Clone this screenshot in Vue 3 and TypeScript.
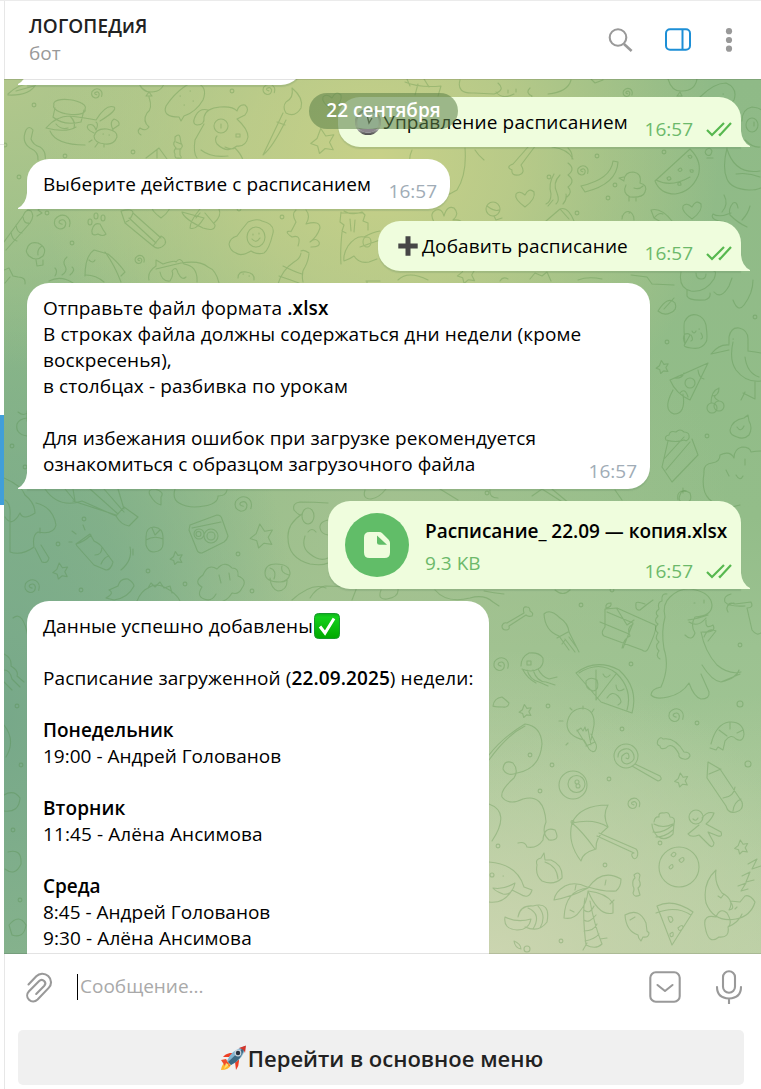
<script setup lang="ts">
interface Point { x: number; y: number; s?: number }

const dots: Point[] = [
  { x: 34, y: 105 }, { x: 232, y: 91 }, { x: 133, y: 152 }, { x: 65, y: 156 }, { x: 5, y: 145 }, { x: 19, y: 177 },
  { x: 47, y: 213 }, { x: 72, y: 243 }, { x: 282, y: 217 }, { x: 239, y: 209 }, { x: 597, y: 156 }, { x: 664, y: 152 },
  { x: 608, y: 198 }, { x: 615, y: 185 }, { x: 549, y: 177 }, { x: 577, y: 213 }, { x: 667, y: 342 }, { x: 755, y: 317 },
  { x: 707, y: 436 }, { x: 12, y: 446 }, { x: 25, y: 467 }, { x: 84, y: 519 }, { x: 58, y: 544 }, { x: 148, y: 571 },
  { x: 81, y: 590 }, { x: 185, y: 584 }, { x: 238, y: 554 }, { x: 252, y: 591 }, { x: 487, y: 493 }, { x: 581, y: 605 },
  { x: 740, y: 645 }, { x: 631, y: 664 }, { x: 612, y: 590 }, { x: 548, y: 706 }, { x: 740, y: 704, s: 3 },
  { x: 697, y: 723 }, { x: 622, y: 729 }, { x: 530, y: 755 }, { x: 552, y: 765 }, { x: 748, y: 764, s: 3 },
  { x: 609, y: 779 }, { x: 540, y: 791 }, { x: 660, y: 843 }, { x: 498, y: 846 }, { x: 605, y: 865 }, { x: 561, y: 941 },
  { x: 527, y: 949, s: 3 }, { x: 17, y: 706 }, { x: 21, y: 765 }, { x: 13, y: 830 }, { x: 20, y: 900 },
]
const stars: Point[] = [
  { x: 322, y: 141, s: 1.25 }, { x: 466, y: 274, s: 0.95 }, { x: 662, y: 367, s: 0.65 }, { x: 60, y: 571, s: 0.8 },
  { x: 176, y: 558, s: 0.65 }, { x: 261, y: 536, s: 1.2 }, { x: 525, y: 711, s: 0.65 }, { x: 681, y: 780, s: 0.7 },
  { x: 741, y: 847, s: 0.7 },
]
const spirals: Point[] = [
  { x: 96, y: 94, s: 0.8 }, { x: 268, y: 90, s: 0.9 }, { x: 61, y: 223, s: 1.2 }, { x: 139, y: 260, s: 0.7 },
  { x: 627, y: 93, s: 0.7 }, { x: 582, y: 171, s: 0.8 }, { x: 242, y: 505, s: 1.25 }, { x: 31, y: 587, s: 1.1 },
  { x: 500, y: 665, s: 1.1 }, { x: 675, y: 716, s: 1.1 }, { x: 633, y: 804, s: 0.9 },
]
const hearts: Point[] = [
  { x: 525, y: 198 }, { x: 692, y: 210 }, { x: 332, y: 101 }, { x: 161, y: 209 },
]
const at = (p: Point) => `translate(${p.x} ${p.y}) scale(${p.s ?? 1})`

const shapes: string[] = [
  // leaf, jar, fish, crab
  'M8 94Q20 82 36 84Q30 96 8 95ZM16 91L34 86',
  'M54 105a16 6 8 1 0 31 4a16 6 8 1 0-31-4M55 108l-2 9q10 9 28 5l3-12M46 128q10-12 24-12q16 2 26 4q10-16 18-13q4 3-14 14M46 128q20 5 30-1M50 131q6 14 35 14M70 116q6 6 4 12M56 124q5 6 12 4',
  'M94 136q2-8 13-7q11 2 10 8q-3 8-12 7q-11-1-11-8M94 133q-9-4-6-8q6-2 8 5q3-6 0-8M113 130q-4-8 1-11q6 2 5 6l-6 4M98 143l-3 4M104 144v3M92 140l-3 2M103 134h.5M109 135h.5',
  'M26 130q3-5 7 0l-2 9q2 6 9 8q8 5 4 19M26 130q-5 12 4 18q9 4 8 12',
  // balloon, loaf
  'M138 80q3 12 13 12q12 0 14-12M149 92l-3 4h6l-3-4M149 97q4 12-2 16q-5 8 2 14q-3 5-9 1q-4 4 1 7',
  'M197 83q11 4 6 17q-7 12-19 16l-3 5l-2-4q-17 0-13-11q8-12 18-19q6-5 13-4M180 96h.5M190 91h.5M184 105h.5M193 101h.5',
  // dog
  'M208 110q-8-2-12 5q-5 9 1 10q8 0 7-8q2-9 16-10q13-1 17 4q2-7 8-6q5 4 0 10l-8 4q11 10 11 18q-2 10-11 9q-10 8-20-2q-3-5 0-8M236 134h4v3h-4zM214 126a7 7 0 1 0 14 0a7 7 0 1 0-14 0M221 124v4M204 124l-9 16q-2 13 2 18M225 147q6 3 10 1M235 148q6 6 8 12M201 150q10 8 27 6',
  // brush
  'M292 88q12 10 9 20q-6 10-15 5q-4-6 0-11q8-4 6-14M283 113l-20 42q10-8 23-35M277 122l8 3',
  'M175 137q4-4 5 0l1 6q3 4-1 6v6q3 4-1 3q-5 1-4-4q-2-3 1-6q-4-4-1-7zM176 142l5 2M176 149h5',
  'M146 158l13-10l8 11M157 150v8',
  // pencil cup and characters under the header
  'M405 82q14 6 36 4l-3 10M418 84l-3 11M424 79l5 8M410 86l-3-7M460 80q-4 14 14 13l20 1q12-4 4-11M496 92q6 8 18 2M530 88q-5 5 2 8q-2 4 3 5M548 94q20-2 23-14M508 90v3M516 89v3',
  'M591 79l4 4l8-3M668 79q4 13 14 12q13 0 15-12M680 92l-3 4h5z',
  'M700 97q14-14 26-14q12 5 8 17q-8 10-18 7M723 94h.5M742 121q0-12 10-14q9 1 10 4M746 125a6 7 0 1 0 12 0a6 7 0 1 0-12 0M754 122v4M727 148q-5 20 0 31q4 10 22 11q14 0 18-8M736 174q12-2 24 3M727 149q8 26 33 22M745 140q8 8 15 7',
  // cup, bone, ribbons
  'M412 150q-4 9-1 14q10 4 12-3M465 148q2 26-8 42l-11 6q-20 2-19-9l-1-9q10-5 21-1l2 9M484 160q-6-5-9-10M513 164l15-17q-3-7 3-7q8-2 5 5l-15 20q5 8-2 10q-8 1-7-5q-7-3 1-6M552 147q16 2 21 12M568 148q5 5 4 11',
  'M568 163q8 6 0 12q8 6 0 12q5 5-1 10M560 175q-8 8-3 18q3 8-1 11M554 174q-6 10-3 20q0 8-5 10M581 186q30-7 32-25l5 1q-1 22-33 30z',
  // duck and melon
  'M624 180q1-8 9-8q9 1 7 11q8 2 5 9q-2 6-15 5q-8-4-4-12M624 177l-5 1l5 3M629 197v4M636 197v4M634 188q5 2 9-2M690 149q13 13 8 27q-7 16-23 18q-15 0-20-13zM656 180q15 8 34-3M688 156q3-2 4 1q-2 3-4-1M678 170q3-4 4 0q-2 3-4 0M690 170q4-1 3 2q-3 1-3-2M667 178q3-3 4 1q-3 3-4-1M678 183q3-2 3 2q-4 1-3-2M706 150q4-4 6 1q-1 6-5 4q-3-2-1-5M707 158h6',
  // flower, lolly, pencil
  'M434 222q-5-9 2-12q6-2 8 6q3-11 10-8q6 6-1 12q10-1 9 5M486 209a7 7 0 1 1 14 0a7 7 0 1 1-14 0M487 206q8 6 12 4M494 216l2 4l6-2M381 200v-6l8 2l2-6h6M546 221l14-12l9 10M560 209q8-3 14 12M548 206l5-6M563 204q4-4 3-10',
  'M651 210l3 8l7 4M651 210q10-3 21 11M654 218q5-6 9-4M724 195q5 9-2 17M731 213q-12 5-18 1q-4 6 12 8M738 208q-1-7-5-5q-5 6-3 12q8 8 17 12M750 206q-2 8-8 14',
  'M622 216h.5M629 213h.5M622 219a3 4 0 0 1 12 1',
  // candle, paw, pencil, plane, egg
  'M4 242l19-26q3-8 8-5q4 5-1 12l-24 27M11 232q1 8 6 9M16 225q1 8 6 8M23 217q1 7 6 6M37 216l5-3l-4-3l4-3M92 230q2-8 8-6q3 6 6 10q-3 3-8 0q-7 3-6-4',
  'M88 222a2 3 0 1 0 4 0a2 3 0 1 0-4 0M94 216a2 3 0 1 0 4 0a2 3 0 1 0-4 0M101 218a2 3 0 1 0 4 0a2 3 0 1 0-4 0',
  'M121 211l4 12l28 23M121 211q12-3 12 2l28 25M126 222q4-1 7-9M129 218l27 25M153 246l8-10q6 3 4 8q-6 7-12 2',
  'M200 209q-10 12-10 19q6 3 14-10l-22-6q2 7 21 16q12 4 12-3l-10-12M214 223q8-7 5-14M196 218l4-5',
  'M248 222q9-4 14-1q13 3 11 12q-4 17-9 20q-7 2-13-2q-10 6-15 2q-6-2-7-9q1-6 8-8q5-7 11-14M247 237a9 10 0 1 0 18 0a9 10 0 1 0-18 0M252 239q4 5 8-1M253 234v1M259 233v1',
  // fish, shark, cat, bottle
  'M27 249q2-8 11-6q10 5 5 13q-7 6-14 0q-4-4-2-7M36 260l1 6l6-1v-5M38 255q-1-6 4-9M4 270l5-2l4 8l5 1q8 0 7 7M10 277l-5 6M55 276q3-5 0-8M62 275q6-4 3-9q-3-5 2-9M70 275q6-5 2-8M49 281q12-6 24 2',
  'M85 276q0-20 9-26l14 4q10 8 17 18l-4 4M89 260q4 4 6 0M105 252q9 12 16 30M86 275q10 0 18 7M149 280q-2-8 7-14v-6l7 4q12-4 13-2q4-6 8 2q14 2 13 18M156 269l25-6q19-3 27 4q8 3 11 16M160 272q2 10 10 9q4-6 2-10q4-6 6 2q4 8 8 4',
  'M301 251q3-2 8 2M301 253q-1 6-7 9q-12 8-16 22M309 254q-1 8-4 13q-4 5-2 15M283 266q12 6 19 8M279 276q12 4 20 7M296 210q-5 4 0 12q-6 12-5 9q-8 0 1 6q10-3 6 9M306 210q5 6 0 14q14-4 14 4q-3 9-10 14q6-5 9 0q2 5-8 5',
  'M238 278q0-7 8-6q9 1 8 8M243 274h.5M249 276h.5',
  // guitarist
  'M341 212l-1 10l4 3l-2 6l4 2M341 213h22M344 211q8 5 18 1l3 3l-2 6l5 2v7M350 219l1 12M355 220l-1 12M342 232q-2 20-1 32M348 246q8-11 16-9q9-5 16-6M348 246q-5 8-4 15q6-2 10-5q5 8 15 6l8-3M363 242a4 5 0 1 0 8 0a4 5 0 1 0-8 0M360 247l20-7',
  'M366 281h14M367 281v4M398 280q10-10 30 0M500 281q3-5 8-2M530 279l5-6l7 3l5-4l4 9M578 280q10-4 24-1M631 275l16 2l5 7l22 1M681 272q-3 16 10 19q14 2 23-12q3-8 0-8M687 290v6q2 5 18 4q6-2 5-7M714 292q7 8 15-6l3-8M733 300q5 13 11 5q9-12 9-25M696 273q0 6 5 6q5 0 5-5',
  // leaf, ghost, pelican, pizza
  'M658 311q10-16 17-8q3 7-5 10q-6 3-12-2M664 309l10-11M685 344q-3-7 0-10q4-1 5 1l-5 9M685 344q-2-22-0-23q4-8 12-6q7 2 9 10q2 15 0 17q-4 8-15 6q-9-1-6-4M692 331q2 4 4 0M699 329h.5M691 335q3 5 0 6M701 333q3 5 0 6',
  'M711 354q8-10 18-9M729 344v-7q2-10 10-9q9 2 9 11v12q8 1 13 2M733 342q-4 18 3 28q10 13 25 11M745 357q2 16 14 20M755 382v17l-12-6M745 392l-4 8M733 339h.5M711 354l18-4',
  'M670 380l38-17l-18 37q-14-6-20-20M674 378q8 1 10-5M698 370q1 8 6 9M685 383a5 5 0 1 0 10 0a5 5 0 1 0-10 0M680 393q5-6 8 4M673 390q-11 20 1 24q12 0 9-20M707 408a5 5 0 1 0 10 0a5 5 0 1 0-10 0M714 406a5 5 0 1 0 10 0a5 5 0 1 0-10 0M711 403q0-12 8-15q0 8-7 8M719 401q-7-4-3-6',
  // fruit, cake, cloud tree
  'M730 430q2-10 14-12l4-3l1 6q4 7 0 14q-5 5-12 2q-7-2-7-7M737 427q4 6 7-1M666 440q-2-4 3-5q1-5 7-3q4-4 8 0q6 0 5 6q-2 4-5 2q-8 3-18 0M668 441l-6 26l10 15l26-27l-6-16M664 459l20-22M666 470l24-28M704 473q-1-9 8-10q8-1 8-8q10-5 14 3q0-9 8-11q8 0 9 5q5-1 10-1M704 473q-3 18 5 26q12 12 31 6M726 470l3 6M745 459v6M736 475q4 7 7 1M680 495q2-7 10-2q3 9-5 10q-8-1-5-8M683 493v-5',
  'M27 418q-8 1-10 6q-2 10 10 12M18 412q6 5 10 0M27 411v10',
  // ice pop and hot air balloon
  'M4 478q18 8 21 17q10 8 10 18q-12 8-15 0q-8 15-15 4M5 500q6 4 5 16v36q12 4 24-5q-2-12 4-15q16 3 18-7q-3-18-20-22M35 548l7 14q6 2 7-4l-8-13M40 528v5',
  'M45 489q14 20 37 12l34 15M65 489l10 12l-2-12M73 501l43 14M90 489l28 25M104 489l20 23M118 489l6 20M116 516l8-9l14 10l-9 9q-8-1-13-10',
  // torch
  'M76 544l14-10l4 7q6 3 8 6l11 15q-2 8-7 8l-12-5l-17-19zM76 544q8-2 15-9M95 555q7 0 7-8M101 564q3-7 8-8M85 530l-2-5M76 534l-4-3M69 542h3M130 547q3 13-9 23M133 549v6',
  // acorn
  'M146 537q0-10 8-10q9 1 9 10v7q0 7-9 8q-6 0-8-7zM146 540q8-5 17-1M152 528l3 7l5-5M155 489q-8 0-5 6q5 9 11 10v-8q4-5-6-8M175 489q-3 10 4 14q10 6 25 3q14-2 14-10q8 0 9-6',
  // camera
  'M190 525l27-10q4 0 5 4l6 17q-1 4-4 6l-22 11q-4 0-5-3l-8-20zM194 534a5 5 0 1 0 10 0a5 5 0 1 0-10 0M196 534a2 2 0 1 0 5 0a2 2 0 1 0-5 0M204 536a7 7 0 1 0 14 0a7 7 0 1 0-14 0M207 536a4 4 0 1 0 8 0a4 4 0 1 0-8 0M192 528l29-6',
  'M203 575q5-12 14-6q8-9 15-1q7 0 6 8q10 4 4 12q-3 7-10 5q-5 9-14 9M203 575q-10 7-1 12q-6 9 2 12q8 3 12-5M219 575l2 8M229 573l1 7M137 601q4-10 11-13q8-6 18 0q10 5 14 13M148 588l3-5l4 4l5-5l4 6l6-2l2 7',
  'M118 586q2-8 10-7q6 4 6 7q-6 12-20 14l-8-2q9-5 3-8zM265 573q0-9 11-9q14 0 14 10q-2 8-10 8q-15 0-15-9M270 578q1 11 8 13q10-1 9-12M270 568q7 2 4 11M282 566q-2 7 7 9',
  'M294 510q-2-7 6-8q14 0 28 1M294 510q6 7 8 4q-15 10-14 24q0 20 22 26q12 2 18-1M302 516a6 8 0 1 0 12 0a6 8 0 1 0-12 0M328 520q-9 2-8 8q1 6 8 7M308 532q4-5 8 0M305 536q-4 12 5 18q10 8 18 4M292 600q20-18 34-12M365 490q-3 9 6 9q8-1 15-10M440 489l18 11M490 490q-1 8 8 8M532 496l10-7l22 14M552 489l18 15M615 490l7 10M678 500q-2-10 8-9',
  'M310 598q6-10 15-12l32 1l-5 13M381 590q-4 10 6 9q12-2 11-10M435 590q12 14 35 8q14-4 23 4l6 4M484 591q10 2 20 3M555 590q8 7 15 0',
  // bone, fork, chocolate
  'M502 626q1-4 5-3l17-10q-2-7 3-6q3 0 3 4q4 2 2 5q-4 1-6-1l-17 11q1 4-3 4q-4 0-4-4',
  'M544 614q6-6 16 4q8 5 9 14l10 20M544 614q1 17 15 22l10 14M557 638l11-6M562 644l3-4M565 639l10 13M569 637l8 11',
  'M605 609l12-1l38 17q3 3-7 24q-2 4-6 1l-38-14q-4-3 1-9zM600 622l29 12M607 612l26 11l-10 25M617 609l10 16l7-5M622 648q2-10 8-12q-4-8 3-12M606 608q-1-5 5-5q1 4-5 5',
  // dinosaur
  'M670 597q11-11 26-7q15 4 16 15q0 11-17 12q-5 8 0 16q-3 9-10 2M670 597q-8 7-5 20q-4 14-1 32q6 18-3 38M694 603h1M704 600v3M688 620q9-1 20-5M689 622q9 6 17-4M706 620q-1 10 7 5q4 8-11 7M701 632q4 20 16 33M704 637q4-10 12-6l-8 10M702 665q10 16 19 17q16-4 18-12M717 665q12 10 24 7M661 687q-10 2-10 8q5 5 17 2q14-3 21-14M689 683q5 14 12 16q9 0 8-7l-8-18M721 682l19-8',
  'M667 594q-6-1-5 7q-5 1-3 8q-5 4-1 7q-5 5 0 8q-5 5 0 9q-4 5 1 9q-5 4 0 9q-4 5 1 8',
  'M731 594q-8 2-6 8q4 5 20 4M727 608q1-7 8-4l16-2q3 6-4 6l5 22q5 7 10 2M728 612q-4-7 6-9M645 604q-8-3-9-1q-1 8 4 7q6-5 13-10',
  // jellyfish
  'M521 666q0-9 8-13q10-1 14 5q1 8-5 11q-7 4-16 0M523 670q4 8 13 13M527 670q3 10 12 12l9 4M533 670q4 12 13 12l9 3M538 669q4 8 11 10l8-2M527 661h4v4h-4z',
  // pizza
  'M576 673q20-15 43-3q20 18 13 43l-31-11zM579 673q20-13 37 0q17 16 11 37M586 681q4-5 11-1q3 10-4 11q-8-2-7-10M596 670v30l20-26M603 674q3 6 7 1M607 698q5-8 11-2q6 6 0 9M616 685q1 9 8 4',
  'M493 706q1-8 9-9q4 3 7 6q-1 5-6 4q-9 0-10-1',
  // fishing rod
  'M489 755q14-18 36-31q16 2 17 20q-2 25-25 29q-10 4-14-4q1-10 10-6q6 7 1 15q-14 12-12 19q7 9 21 2q21-6 23 23q-5 11 3 18q12 1 6-10q-11-4-12 10q-6 9-16 7q-2-6-9-4M489 760q18-25 36-34',
  // bulb, eight ball, lollipop
  'M584 740q-17-4-17-16q2-15 16-16q12 2 11 17l-3 15M584 740l5 9q3 4 6 2q3-4 0-9l-4-8M586 746l9-4M577 730l10 16M577 731l4-3l2 3l2-4l1 4l2-2l3 16M572 710l-2-2M583 709v-3M592 712l2-3M563 721h-4M568 743l-2 2M559 785a14 14 0 1 0 28 0a14 14 0 1 0-28 0M568 784a8 8 0 1 0 17 0a8 8 0 1 0-17 0M575 782a2 2 0 1 0 4 0a2 2 0 1 0-4 0M576 786a2 2 0 1 0 4 0a2 2 0 1 0-4 0',
  'M614 756a12 12 0 1 0 24 0a12 12 0 1 0-24 0M618 757a8 8 0 0 1 15-4q4 8-6 11q-7-1-5-8q6-6 7 0q0 4-3 2M635 764l25 12q3 4-2 5l-26-15',
  // bone, shrimp, marker
  'M658 740q3-4 5-1q12-2 21 13q6 0 6 4q-2 4-6 3q-6-1-5-5q-7-13-13-6q-6 2-6-2q-4-1-2-6M711 744q5-20 18-22q14-1 15 12q-1 9-8 5q-5-6-11 2l-2 9l-5-3l-2 3l-6-2M719 730l8 6M730 722v7M743 730l-6 3M708 762l12 7l22 33q2 8-6 10q-8 2-10-6l-19-28zM709 774l12-5M723 798q11-1 12-11M733 811q1-9 8-12',
  // umbrella
  'M608 805q-28 0-36 18q-5 20 9 38q1-8 15-12q-1-12 12-22q-6-12 0-22M572 823q10 8 23 26M572 823q22-5 36 4M599 833l37 16q3 3 1 8q-3 4-5-1q-1-3 2-3l-37-17M571 822a1.5 1.5 0 1 0 3 0a1.5 1.5 0 1 0-3 0',
  // cupcake, gingerbread man
  'M654 822q1-6 5-5q-1-5 5-4q5-2 6 4q6 0 4 7l-1 10q-8 8-16 2q-5-6-5-12M654 824q9 5 19 0M653 832q9 2 20-7M656 837q9 0 17-7M689 817a7 7 0 1 0 14 0a7 7 0 1 0-14 0M702 818q5-7 12-5q-2 6-8 11l15 8q2 5-3 4l-10-4l6 11q-1 6-5 2l-10-10q-8 3-11-1l11-9M693 819q3 3 5-1',
  // whale, peach
  'M489 862q28 2 35 25l8 3q-3 10-12 4l-8-4q-8 14-23 12M490 875a2 2 0 1 0 4 0a2 2 0 1 0-4 0M503 876h.5M493 888q10 2 22-5q-3 13-12 11q-8-3-10-6M489 804q22 8 3 37M537 865q-2-6 4-7l3-5l1 7l6 0q12 5 11 18q-8 8-20 3q-7-6-5-16M545 862q12 4 13 17',
  // palm
  'M587 887q-12-6-22-1q-10 6-11 14q17-3 34-12M588 888q14-20 33-9q0 8-5 12q-12 1-28-4M588 888q-23 2-24 30q10 2 16-7q7-8 8-20q18 2 25 12v10q-14 4-25-22M585 898q-3 15 1 47q10 5 16-1q-8-20-12-43M584 910q6 5 10-4M584 920q5 4 12-5M584 931q10 0 13-7M585 941q10-2 14-7M600 939l7-1M583 950l4-7M575 890l1-5M605 885l1-5M570 910l4 2M610 904l4-4',
  // candy, bowling ball
  'M634 875q4-4 6 0l-1 5q3 5-1 8l2 7q-6 3-7-2q2-4 0-7q-1-6 2-8zM659 867a20 20 0 1 0 40 0a20 20 0 1 0-40 0M671 855q3-5 5-1q-2 5-5 1M679 860q5-5 5 0q-3 5-5 0M669 867q4-5 4 0q-3 4-4 0',
  // oranges, fish, pizza
  'M505 917q12 6 26 2q-2 11-14 11q-14-1-12-13M518 917q2-12 15-11q18-5 14 16q-8 11-22 5M528 908q14 6 5 21M538 906q9 10 2 22M514 941q7 3 7 8q-6-1-7-8M625 915q14-8 21 8l1 8l2 2q0 5-6 4l-2 4q-3-3-3-6q-12-4-13-20M630 920l5-3M657 906q16-8 36 6l-21 33zM656 913q20-8 35 2M668 917q4-2 5 3q-3 6-5-3M678 928q5-5 5 0q-4 5-5 0M670 934q4-4 3 2q-3 2-3-2',
  // sleeping moon
  'M716 870q-14 13-10 33q8 20 30 16q15-3 19-17q-5-8-10-6l-5 6l-10-1q6 8-1 9q6-10-7-17q-8-10-6-23M718 896l3 2l3-4M735 909l2-2M705 926q-2-12 11-9q4-10 11-4q6 10 1 14q2 11-9 10q-11 9-14-11M738 886l8-3l-5 8l7-2M742 876l8-4l-4 10l8-2M748 864l9-5l-5 10l9-3M742 914q-3 8-14 13',
  // shapes along the left edge
  'M13 618q10-8 15 19M4 654q8 4 7 12q8 5 6 10l7 6M4 670q6 0 8 9l8 8M4 682l8 8M4 725q12 15 2 32M4 795q10-6 16 3q-1 15-16 13M8 852q14-4 13 12q-6 13-16 5M9 925q10-12 17 0q-2 14-14 10z',
]
</script>

<template>
  <div class="window">
    <aside class="rail"><i class="rail-line"></i><i class="rail-active"></i></aside>
    <main class="pane">
      <header class="header">
        <div class="peer">
          <h1>ЛОГОПЕДиЯ</h1>
          <p>бот</p>
        </div>
        <svg class="header-icons" width="136" height="34" viewBox="0 0 136 34" fill="none">
          <g stroke="#999" stroke-width="2.1"><circle cx="13" cy="14.5" r="8.3" /><path d="M19 21l7.6 7" stroke-width="2.6" /></g>
          <g stroke="#1d8fd6" stroke-width="2"><rect x="61" y="6.2" width="24" height="20.6" rx="4" /><path d="M77.5 6v21" /></g>
          <g fill="#999"><circle cx="124" cy="8.2" r="3.1" /><circle cx="124" cy="17" r="3.1" /><circle cx="124" cy="25.7" r="3.1" /></g>
        </svg>
      </header>

      <section class="chat">
        <svg class="doodles" viewBox="4 79 757 875" width="757" height="875">
          <path v-for="(d, i) in shapes" :key="'p' + i" :d="d" />
          <circle v-for="(p, i) in dots" :key="'d' + i" :cx="p.x" :cy="p.y" :r="p.s ?? 1.9" />
          <path v-for="(p, i) in stars" :key="'s' + i" :transform="at(p)" d="M-1-10L3-4L9.5-5L6 1L9 7L2.5 6L-2 10L-3.5 4L-9 2L-4-2Z" />
          <path v-for="(p, i) in spirals" :key="'w' + i" :transform="at(p)" d="M1 1Q-3 0-1-2Q3-4 4 0Q4 5-1 5Q-7 3-5-3Q-1-8 4-6Q9-3 7 3" />
          <path v-for="(p, i) in hearts" :key="'h' + i" :transform="at(p)" d="M0 9Q-11 1-9-4Q-6-8 0-3Q4-11 9-6Q11 1 0 9Z" />
        </svg>

        <div class="messages">
          <div class="bubble in w-prev"><svg class="tail" viewBox="0 0 10 16"><path d="M10 0V16H0V15Q8 11 9 0Z" /></svg></div>

          <div class="bubble out w-manage">
            <svg class="emoji clock" viewBox="0 0 26 26">
              <defs><linearGradient id="rim" x1="0" y1="0" x2="0" y2="1"><stop offset="0" stop-color="#9a9a9a" /><stop offset=".7" stop-color="#ddd" /><stop offset="1" stop-color="#555" /></linearGradient></defs>
              <circle cx="13" cy="13" r="12" fill="#d8e5e8" stroke="url(#rim)" stroke-width="2.5" />
              <path d="M3.5 19Q13 21 22.5 19A12 12 0 0 1 3.5 19" fill="#8b858b" />
              <path d="M12 6l2 8l3-5" fill="none" stroke="#555" stroke-width="1.4" />
            </svg><span>Управление расписанием</span>
            <span class="meta">16:57<svg class="ticks" viewBox="0 0 26 16"><path d="M1 9l5 5L18 2M13 13l1 1L25 2" /></svg></span>
            <svg class="tail" viewBox="0 0 10 16"><path d="M10 0V16H0V15Q8 11 9 0Z" /></svg>
          </div>

          <div class="bubble in w-choose">
            <span class="wide">Выберите действие с расписанием</span><span class="meta">16:57</span>
            <svg class="tail" viewBox="0 0 10 16"><path d="M10 0V16H0V15Q8 11 9 0Z" /></svg>
          </div>

          <div class="bubble out w-add">
            <svg class="emoji plus" viewBox="0 0 26 26"><path d="M13 3.3V22.7M3.3 13H22.7" stroke="#464646" stroke-width="5" /></svg><span class="wide">Добавить расписание</span>
            <span class="meta">16:57<svg class="ticks" viewBox="0 0 26 16"><path d="M1 9l5 5L18 2M13 13l1 1L25 2" /></svg></span>
            <svg class="tail" viewBox="0 0 10 16"><path d="M10 0V16H0V15Q8 11 9 0Z" /></svg>
          </div>

          <div class="bubble in w-send">
            <span class="wide">Отправьте файл формата <b>.xlsx</b><br />В строках файла должны содержаться дни недели (кроме<br />воскресенья),<br />в столбцах - разбивка по урокам<br /><br />Для избежания ошибок при загрузке рекомендуется</span><br />ознакомиться с образцом загрузочного файла<span class="meta">16:57</span>
            <svg class="tail" viewBox="0 0 10 16"><path d="M10 0V16H0V15Q8 11 9 0Z" /></svg>
          </div>

          <div class="bubble out file">
            <div class="file-icon">
              <svg viewBox="0 0 26 26" width="26" height="26"><path fill="#effddd" d="M5.5 0H15Q17 0 18.5 1.4L24.5 7.5Q26 9 26 11V20.5Q26 26 20.5 26H5.5Q0 26 0 20.5V5.5Q0 0 5.5 0Z" /><path d="M13 3.5L23 12.8H15.5Q13 12.8 13 10.3Z" fill="#61bd68" /></svg>
            </div>
            <div class="file-text"><b>Расписание_ 22.09 — копия.xlsx</b><span>9.3 KB</span></div>
            <span class="meta">16:57<svg class="ticks" viewBox="0 0 26 16"><path d="M1 9l5 5L18 2M13 13l1 1L25 2" /></svg></span>
            <svg class="tail" viewBox="0 0 10 16"><path d="M10 0V16H0V15Q8 11 9 0Z" /></svg>
          </div>

          <div class="bubble in w-done">
            <span class="wide">Данные успешно добавлены</span><svg class="emoji check" viewBox="0 0 26 26">
              <defs><linearGradient id="chk" x1="0" y1="0" x2="0" y2="1"><stop offset="0" stop-color="#10b01c" /><stop offset=".15" stop-color="#14d01c" /><stop offset="1" stop-color="#00a800" /></linearGradient></defs>
              <rect x=".5" y=".5" width="25" height="25" rx="4" fill="url(#chk)" stroke="#179a2c" />
              <path d="M6 13.5l5 6.5L20 5.5" fill="none" stroke="#fff" stroke-width="3" />
            </svg><br /><br /><span class="wide">Расписание загруженной (<b>22.09.2025</b>) недели:</span><br /><br /><b>Понедельник</b><br />19:00 - Андрей Голованов<br /><br /><b class="wide">Вторник</b><br /><span class="wide">11:45 - Алёна Ансимова</span><br /><br /><b>Среда</b><br />8:45 - Андрей Голованов<br /><span class="wide">9:30 - Алёна Ансимова</span><br /><br />
          </div>
        </div>
        <div class="date">22 сентября</div>
      </section>

      <footer class="composer">
        <div class="input-row">
          <svg class="clip" viewBox="0 0 28 32" width="28" height="32"><path d="M2.5 12.5L10.3 4.3C13.4 1.1 18.5.6 22.2 4.1C26.2 7.8 25.6 12.8 22.7 15.9L11.6 27.5C8.9 30.1 5.4 30 3 27.7C.5 25.2.7 21.6 3 19.2L12.9 9.2C14.6 7.5 16.8 7.6 18.2 9C19.7 10.5 19.4 12.6 18.1 14L10.2 22" /></svg>
          <div class="field"><i></i>Сообщение...</div>
          <svg class="box" viewBox="0 0 32 32" width="32" height="32"><rect x="1.3" y="1.3" width="29.4" height="29.4" rx="5.5" /><path d="M8.5 14l7.5 6l7.5-6" /></svg>
          <svg class="mic" viewBox="0 0 28 34" width="28" height="34"><rect x="8" y="1.2" width="12" height="21.5" rx="6" /><path d="M2 17q0 11 12 11.5q12-.5 12-11.5M14 28.5V34" /></svg>
        </div>
        <button class="menu" type="button">
          <svg viewBox="0 0 26 26" width="26" height="26">
            <path d="M8 12L2 12Q4 9 9 8L13 8ZM14 17L15 25Q18 21 18 16L18 12Z" fill="#ee3f24" />
            <path d="M6 16Q1 18 0 25Q8 25 10 20Z" fill="#ffb52d" /><path d="M5 14L9 21L4 21L0 15Z" fill="#ef4f2c" /><path d="M5 18L8 20L3 24Z" fill="#ffe06a" />
            <path d="M6 16Q10 5 24 1Q24 13 10 20Z" fill="#83b4d0" /><path d="M10 20Q21 15 24 1L7 17Z" fill="#3d6983" />
            <path d="M18 3L25 .5L24 8Q23 4 18 3Z" fill="#d3352b" /><circle cx="17" cy="8" r="3.4" fill="#c9d4dd" /><circle cx="17" cy="8" r="2.2" fill="#27303c" />
          </svg>Перейти в основное меню
        </button>
      </footer>
    </main>
  </div>
</template>

<style>
html, body { margin: 0; overflow: hidden; }
</style>

<style scoped>
.window { display: flex; width: 761px; height: 1089px; box-sizing: border-box; border-top: 1px solid #ebebeb; background: #fff; font-family: "Open Sans", "Noto Sans", sans-serif; font-size: 19px; line-height: 26px; color: #000; overflow: hidden; }
b { font-weight: 600; }
.wide { letter-spacing: .1px; }
.rail { width: 4px; flex: none; display: flex; flex-direction: column; }
.rail-line { height: 1px; margin-top: 143px; background: #e5e5e5; }
.rail-active { height: 90px; margin-top: 270px; background: #419fd9; }
.pane { width: 757px; display: flex; flex-direction: column; }
.header { height: 78px; flex: none; box-sizing: border-box; border-left: 1px solid #e7e7e7; display: flex; justify-content: space-between; padding: 11px 20px 0 24px; }
h1 { margin: 0; font-size: 19px; line-height: 28px; font-weight: 600; letter-spacing: .1px; color: #222; }
.peer p { margin: 0; line-height: 27px; color: #999; }
.header-icons { margin-top: 11px; }
.chat { position: relative; height: 875px; flex: none; overflow: hidden; box-sizing: border-box;
  background:
    radial-gradient(ellipse 340px 330px at 375px 80px, rgba(200,209,136,1), rgba(197,207,137,.75) 40%, rgba(190,203,139,0)),
    radial-gradient(ellipse 360px 330px at 480px 900px, rgba(206,214,178,1), rgba(202,212,174,.7) 35%, rgba(195,210,170,0)),
    radial-gradient(ellipse 420px 260px at 757px 875px, rgba(188,208,166,.9), rgba(188,208,166,0)),
    radial-gradient(ellipse 400px 290px at 0 0, rgba(180,200,140,.95), rgba(170,197,139,.6) 55%, rgba(170,197,139,0)),
    radial-gradient(ellipse 300px 520px at 0 640px, rgba(119,168,137,1), rgba(121,170,137,.7) 50%, rgba(128,174,138,0)),
    radial-gradient(ellipse 340px 300px at 390px 460px, rgba(166,194,145,.9), rgba(166,194,145,0)),
    linear-gradient(#8fba87, #93bd89 50%, #9cc291 65%, #a6c896); }
.doodles { position: absolute; left: 0; top: 0; fill: none; stroke: rgba(76,134,62,.29); stroke-width: 1.1; stroke-linecap: round; stroke-linejoin: round; }
.doodles path { vector-effect: non-scaling-stroke; }
.chat::before, .chat::after { content: ""; position: absolute; z-index: 3; left: 0; right: 0; height: 1px; background: rgba(0,0,0,.11); }
.chat::before { top: 0; }
.chat::after { bottom: 0; }
.messages { position: relative; display: flex; flex-direction: column; gap: 12px; padding: 0 20px 0 23px; }
.bubble { position: relative; flex: none; box-sizing: border-box; padding: 12px 16px; border-radius: 22px; white-space: nowrap; box-shadow: 0 2px 1px rgba(90,130,90,.22); }
.in { align-self: flex-start; background: #fff; border-bottom-left-radius: 0; fill: #fff; }
.out { align-self: flex-end; background: #effddd; border-bottom-right-radius: 0; fill: #effddd; }
.tail { position: absolute; bottom: 0; width: 10px; height: 16px; }
.in .tail { left: -9px; }
.out .tail { right: -9px; transform: scaleX(-1); }
.w-prev { width: 276px; height: 50px; margin-top: -44px; }
.w-manage { width: 403px; letter-spacing: .16px; }
.w-choose { width: 423px; }
.w-add { width: 363px; }
.w-send { width: 623px; }
.w-done { width: 462px; }
.emoji { width: 26px; height: 26px; vertical-align: top; }
.clock { margin: 0 2px 0 1px; }
.plus { margin: 0 1px; }
.check { margin-left: 1px; }
.meta { position: absolute; right: 13px; bottom: 5px; color: #a0acb6; letter-spacing: 0; display: flex; align-items: center; }
.out .meta { right: 9px; color: #6cb96a; }
.ticks { width: 26px; height: 16px; margin-left: 13px; fill: none; stroke: #57b84f; stroke-width: 2.2; }
.date { position: absolute; z-index: 2; left: 305px; top: 14px; width: 149px; height: 36px; border-radius: 18px; background: rgba(93,131,74,.57); color: #fff; font-weight: 600; line-height: 34px; text-align: center; white-space: nowrap; }
.file { width: 413px; height: 88px; display: flex; gap: 16px; padding: 12px 14px 12px 17px; }
.file-icon { width: 64px; height: 64px; border-radius: 50%; background: #61bd68; display: flex; align-items: center; justify-content: center; flex: none; }
.file-text { display: flex; flex-direction: column; gap: 6px; padding-top: 5px; }
.file-text b { letter-spacing: -.03px; }
.file-text span { color: #6cb96a; }
.composer { flex: 1; box-sizing: border-box; border-left: 1px solid #e7e7e7; padding: 0 17px 4px 13px; display: flex; flex-direction: column; }
.input-row { display: flex; align-items: center; height: 65px; padding-left: 8px; margin-bottom: 11px; }
.clip, .box, .mic { fill: none; stroke: #999; stroke-width: 2.1; stroke-linecap: round; stroke-linejoin: round; flex: none; }
.clip { margin-top: 2px; }
.field { flex: 1; display: flex; align-items: center; margin: -2px 0 0 23px; color: #a9a9a9; }
.field i { width: 1px; height: 26px; background: #000; margin: 2px 2px 0 0; }
.mic { margin-left: 34px; margin-right: 1px; }
.menu { width: 726px; height: 55px; flex: none; border: 0; border-radius: 5px; background: #f0f0f0; padding: 0 0 0 2px; display: flex; align-items: center; justify-content: center; font: 600 22px/30px "Open Sans", "Noto Sans", sans-serif; color: #222; }
.menu svg { margin-right: 1px; }
</style>
